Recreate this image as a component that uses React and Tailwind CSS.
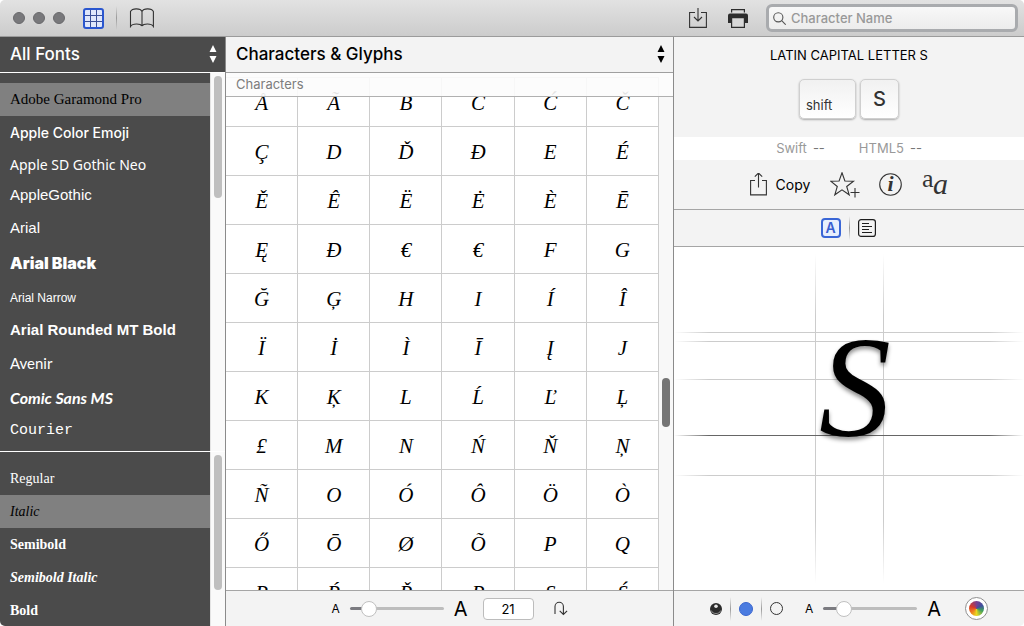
import React, { useState } from 'react';
import clsx from 'clsx';

const fonts = [
  { name: 'Adobe Garamond Pro', row: 'h-[33px]', face: "text-[15px] font-['Liberation_Serif',serif]" },
  { name: 'Apple Color Emoji', row: 'h-[33px]', face: "text-[14px] font-medium font-['Inter',sans-serif]" },
  { name: 'Apple SD Gothic Neo', row: 'h-[30px]', face: "text-[14px] font-['Noto_Sans',sans-serif]" },
  { name: 'AppleGothic', row: 'h-[33px]', face: "text-[15px] font-['Liberation_Sans',sans-serif]" },
  { name: 'Arial', row: 'h-[33px]', face: "text-[15px] font-['Liberation_Sans',sans-serif]" },
  { name: 'Arial Black', row: 'h-[36px]', face: "text-[16px] font-black font-['Inter',sans-serif]" },
  { name: 'Arial Narrow', row: 'h-[33px]', face: "text-[12px] font-['Liberation_Sans_Narrow','Liberation_Sans',sans-serif]" },
  { name: 'Arial Rounded MT Bold', row: 'h-[33px]', face: "text-[15px] font-bold font-['Liberation_Sans',sans-serif]" },
  { name: 'Avenir', row: 'h-[33px]', face: "text-[15px] font-['Lato',sans-serif]" },
  { name: 'Comic Sans MS', row: 'h-[36px]', face: "text-[16px] font-bold italic font-['Lato',sans-serif]" },
  { name: 'Courier', row: 'h-[30px]', face: "text-[15px] font-['Liberation_Mono',monospace]" },
];

const styles = [
  { name: 'Regular', row: 'h-[33px]', face: "text-[14px] font-['Liberation_Serif',serif]" },
  { name: 'Italic', row: 'h-[33px]', face: "text-[14px] italic font-['Liberation_Serif',serif]" },
  { name: 'Semibold', row: 'h-[33px]', face: "text-[14px] font-bold font-['Liberation_Serif',serif]" },
  { name: 'Semibold Italic', row: 'h-[33px]', face: "text-[14px] font-bold italic font-['Liberation_Serif',serif]" },
  { name: 'Bold', row: 'h-[33px]', face: "text-[14px] font-bold font-['Liberation_Serif',serif]" },
];

const glyphs = [
  'Å', 'Ã', 'B', 'C', 'Ć', 'Č',
  'Ç', 'D', 'Ď', 'Đ', 'E', 'É',
  'Ě', 'Ê', 'Ë', 'Ė', 'È', 'Ē',
  'Ę', 'Ð', '€', '€', 'F', 'G',
  'Ğ', 'Ģ', 'H', 'I', 'Í', 'Î',
  'Ï', 'İ', 'Ì', 'Ī', 'Į', 'J',
  'K', 'Ķ', 'L', 'Ĺ', 'Ľ', 'Ļ',
  '£', 'M', 'N', 'Ń', 'Ň', 'Ņ',
  'Ñ', 'O', 'Ó', 'Ô', 'Ö', 'Ò',
  'Ő', 'Ō', 'Ø', 'Õ', 'P', 'Q',
  'R', 'Ŕ', 'Ř', 'Ŗ', 'S', 'Ś',
];

const Divider = ({ className }) => (
  <span className={clsx('w-px bg-linear-to-b from-transparent via-[#9a9a9a] to-transparent', className)} />
);

const Arrows = ({ className }) => (
  <svg viewBox="0 0 8 18" className={clsx('pointer-events-none absolute top-2 h-[18px] w-2', className)} fill="currentColor">
    <path d="M4 0 7.500 7h-7zM4 18 7.500 11h-7z" />
  </svg>
);

const FontList = ({ label, items, initial, thumb }) => {
  const [selected, setSelected] = useState(initial);

  return (
    <div className="flex h-full">
      <ul aria-label={label} className="min-w-0 flex-1 overflow-hidden pt-2.5">
        {items.map((item) => (
          <li key={item.name}>
            <button
              type="button"
              onClick={() => setSelected(item.name)}
              className={clsx(
                'block w-full truncate px-2.5 text-left',
                item.row,
                item.face,
                selected === item.name ? 'bg-[#808080] text-black' : 'text-white'
              )}
            >
              {item.name}
            </button>
          </li>
        ))}
      </ul>
      <div className="w-[15px] border-l border-[#e4e4e4] bg-[#fafafa] px-[3px] pt-[3px]">
        <div className={clsx('w-2 rounded-full bg-[#bfbfbf]', thumb)} />
      </div>
    </div>
  );
};

const SizeSlider = ({ label, initial }) => {
  const [value, setValue] = useState(initial);

  return (
    <label className="flex items-center gap-2.5">
      <span className="text-[12px]">A</span>
      <input
        type="range"
        aria-label={label}
        value={value}
        onChange={(e) => setValue(e.target.value)}
        style={{ backgroundImage: `linear-gradient(to right, #7b7b80 ${value}%, #bdbdbd ${value}%)` }}
        className="h-[3px] w-[94px] appearance-none rounded-full [&::-webkit-slider-thumb]:h-4 [&::-webkit-slider-thumb]:w-4 [&::-webkit-slider-thumb]:appearance-none [&::-webkit-slider-thumb]:rounded-full [&::-webkit-slider-thumb]:border [&::-webkit-slider-thumb]:border-[#c0c0c0] [&::-webkit-slider-thumb]:bg-white"
      />
      <span className="text-[20px] leading-5">A</span>
    </label>
  );
};

const TopBar = () => (
  <header className="flex h-[37px] shrink-0 items-center border-b border-[#9b9b9b] bg-linear-to-b from-[#e2e2e2] to-[#cccccc] pr-[6px] pl-[13px]">
    <div className="flex gap-2">
      <button type="button" aria-label="Close" className="size-3 rounded-full border border-[#69696c] bg-[#78787b]" />
      <button type="button" aria-label="Minimize" className="size-3 rounded-full border border-[#69696c] bg-[#78787b]" />
      <button type="button" aria-label="Zoom" className="size-3 rounded-full border border-[#69696c] bg-[#78787b]" />
    </div>
    <button type="button" aria-label="Grid view" className="ml-[18px]">
      <svg viewBox="0 0 21 21" className="size-[21px]" fill="none" stroke="#2a56cf">
        <rect x="1" y="1" width="19" height="19" rx="2" fill="#dfe7fb" strokeWidth="2" />
        <path d="M7.500 2v17M13.500 2v17M2 7.500h17M2 13.500h17" stroke="#3a4f96" />
      </svg>
    </button>
    <Divider className="mx-3 h-6" />
    <button type="button" aria-label="Book view">
      <svg viewBox="0 0 25 20" className="h-5 w-[25px]" fill="none" stroke="#333" strokeWidth="1.100">
        <path d="M13 3.500v14.500M13 3.500C11.500.2 3.500-.2 1.500 3.500v15c2-3.300 10-3 11.500-.5M13 3.500C14.500.2 22.500-.2 24.400 3.500v15c-2-3.300-9.900-3-11.400-.5" />
      </svg>
    </button>
    <div className="flex-1" />
    <button type="button" aria-label="Save">
      <svg viewBox="0 0 18 21" className="h-[21px] w-[18px]" fill="none" stroke="#333" strokeWidth="1.100">
        <path d="M6 4.500H.6v14.900h16.800V4.500H12M9 0v13M5 9l4 4 4-4" />
      </svg>
    </button>
    <button type="button" aria-label="Print" className="ml-[21px]">
      <svg viewBox="0 0 20 19" className="h-[19px] w-5">
        <path d="M3.600 3.500V.6h12.800v2.900" fill="none" stroke="#2d2d2d" strokeWidth="1.200" />
        <path d="M2 4.500h16a2 2 0 0 1 2 2V14H0V6.500a2 2 0 0 1 2-2z" fill="#2d2d2d" />
        <path d="M3.600 8.600h12.800v9.800H3.600z" fill="#d8d8d8" stroke="#2d2d2d" strokeWidth="1.200" />
      </svg>
    </button>
    <label className="ml-[18px] flex h-7 w-[252px] items-center gap-[5px] rounded-[6px] border-[3px] border-[#a9abae] bg-linear-to-b from-[#f8f8f8] to-[#ececec] px-1">
      <svg viewBox="0 0 13 13" className="size-[13px]" fill="none" stroke="#555" strokeWidth="1.100">
        <circle cx="5.300" cy="5.300" r="4.600" />
        <path d="m8.700 8.700 4 4" />
      </svg>
      <input
        type="text"
        aria-label="Search by character name"
        placeholder="Character Name"
        className="min-w-0 flex-1 bg-transparent pt-0.5 text-[13px] outline-none placeholder:font-medium placeholder:text-[#999]"
      />
    </label>
  </header>
);

const Sidebar = () => (
  <aside className="flex w-[226px] shrink-0 flex-col border-r border-[#8b8b8b] bg-[#4b4b4b]">
    <div className="relative h-9 shrink-0 border-b border-white text-white">
      <select aria-label="Font collection" className="h-full w-full appearance-none px-2.5 text-[17px] font-medium">
        <option>All Fonts</option>
      </select>
      <Arrows className="right-2" />
    </div>
    <div className="min-h-0 flex-1">
      <FontList label="Fonts" items={fonts} initial="Adobe Garamond Pro" thumb="h-[122px]" />
    </div>
    <div className="h-[175px] shrink-0 border-t border-white">
      <FontList label="Styles" items={styles} initial="Italic" thumb="h-[135px]" />
    </div>
  </aside>
);

const GlyphPane = () => (
  <main className="flex min-w-0 flex-1 flex-col">
    <div className="relative h-9 shrink-0 border-b border-[#9f9f9f] bg-[#f3f3f3]">
      <select aria-label="Glyph view" className="h-full w-full appearance-none px-2.5 text-[17px] font-medium">
        <option>Characters &amp; Glyphs</option>
      </select>
      <Arrows className="right-2" />
    </div>
    <div className="relative flex min-h-0 flex-1 bg-white">
      <h2 className="absolute inset-x-0 top-0 h-6 border-b border-[#b0b0b0] bg-[#fcfcfc]/90 px-2.5 text-[13px] leading-[22px] text-[#7d7d7d]">
        Characters
      </h2>
      <div className="min-w-0 flex-1 overflow-hidden">
        <div className="h-[5px] border-b border-[#cccccc]" />
        <div className="grid grid-cols-6">
          {glyphs.map((glyph, i) => (
            <button
              key={i}
              type="button"
              className="h-[49px] border-r border-b border-[#cccccc] pt-[3px] font-['Liberation_Serif',serif] text-[21px] italic"
            >
              {glyph}
            </button>
          ))}
        </div>
      </div>
      <div className="w-3.5 bg-[#f8f8f8] px-[3px]">
        <div className="mt-[305px] h-[49px] w-2 rounded-full bg-[#757575]" />
      </div>
    </div>
    <footer className="flex h-9 shrink-0 items-center justify-center border-t border-[#a5a5a5] bg-[#f3f3f3]">
      <SizeSlider label="Grid glyph size" initial={14} />
      <input
        type="text"
        aria-label="Glyph size"
        defaultValue="21"
        className="ml-[15px] h-[22px] w-[51px] rounded-[4px] border border-[#bcbcbc] bg-white text-center text-[13px]"
      />
      <button type="button" aria-label="Reset size" className="ml-5">
        <svg viewBox="0 0 14 15" className="h-[15px] w-3.5" fill="none" stroke="#333" strokeWidth="1.100">
          <path d="M1 13V5.500a4.200 4.200 0 0 1 8.400 0V13M5.700 9.800l3.700 3.700 3.700-3.700" />
        </svg>
      </button>
    </footer>
  </main>
);

const Preview = () => (
  <div className="relative min-h-0 flex-1 overflow-hidden bg-white">
    <div className="mx-auto h-full w-[69px] border-x border-[#cccccc] mask-y-from-80% mask-y-to-98%" />
    <div className="absolute inset-x-0 top-[85px] h-px bg-[#cccccc] mask-x-from-90% mask-x-to-100%" />
    <div className="absolute inset-x-0 top-[94px] h-px bg-[#cccccc] mask-x-from-90% mask-x-to-100%" />
    <div className="absolute inset-x-0 top-[132px] h-px bg-[#cccccc] mask-x-from-90% mask-x-to-100%" />
    <div className="absolute inset-x-0 top-[188px] h-px bg-[#666666] mask-x-from-90% mask-x-to-100%" />
    <div className="absolute inset-x-0 top-[228px] h-px bg-[#cccccc] mask-x-from-90% mask-x-to-100%" />
    <div className="absolute inset-x-0 top-[69px] pl-3 text-center font-['Liberation_Serif',serif] text-[144px] leading-none italic text-shadow-[0_3px_4px_rgba(0,0,0,0.45)]">
      S
    </div>
  </div>
);

const Inspector = () => (
  <aside className="flex w-[351px] shrink-0 flex-col border-l border-[#8b8b8b] bg-[#f3f3f3]">
    <h1 className="pt-2 text-center text-[13px] leading-5">LATIN CAPITAL LETTER S</h1>
    <div className="mt-3.5 mb-[18px] flex justify-center gap-1 text-[#333]">
      <kbd className="flex h-10 w-[57px] items-end rounded-[5px] border border-[#cfcfcf] bg-linear-to-b from-[#f1f1f1] to-white px-1.5 pb-[3px] font-['Inter',sans-serif] text-[13px] shadow-[0_1px_2px_rgba(0,0,0,0.3)]">
        shift
      </kbd>
      <kbd className="flex h-10 w-[39px] items-center justify-center rounded-[5px] border border-[#cfcfcf] bg-linear-to-b from-[#f1f1f1] to-white font-['Inter',sans-serif] text-[20px] font-medium shadow-[0_1px_2px_rgba(0,0,0,0.3)]">
        S
      </kbd>
    </div>
    <dl className="flex h-[23px] items-center justify-center bg-white text-[13px] text-[#999]">
      <dt>Swift</dt>
      <dd className="ml-1.5 text-[#777]">--</dd>
      <dt className="ml-[34px]">HTML5</dt>
      <dd className="ml-1.5 text-[#777]">--</dd>
    </dl>
    <div className="flex h-[50px] items-center justify-center border-b border-[#a5a5a5]">
      <button type="button" className="flex items-center gap-[9px] text-[14px]">
        <svg viewBox="0 0 17 24" className="h-6 w-[17px]" fill="none" stroke="#333" strokeWidth="1.100">
          <path d="M5 7.500H.6v14.400h15.800V7.500H12M8.500 14.500V0M4.800 3.700 8.500 0l3.700 3.700" />
        </svg>
        Copy
      </button>
      <button type="button" aria-label="Add to favorites" className="ml-5">
        <svg viewBox="0 0 30 26" className="h-[26px] w-[30px]" fill="none" stroke="#333" strokeWidth="1.100">
          <path d="m12 .8 2.900 8.200 8.600.2-6.800 5.300 2.500 8.300-7.200-4.900-7.200 4.900 2.500-8.300L.7 9.200 9.100 9z" />
          <path d="M20.500 20.500h9M25 16v9.500" />
        </svg>
      </button>
      <button type="button" aria-label="Character info" className="ml-[19px]">
        <svg viewBox="0 0 23 23" className="size-[23px]">
          <circle cx="11.500" cy="11.500" r="10.800" fill="none" stroke="#333" strokeWidth="1.100" />
          <text x="11.500" y="18" textAnchor="middle" fill="#333" className="font-['Liberation_Serif',serif] text-[22px] font-bold italic">i</text>
        </svg>
      </button>
      <button type="button" aria-label="Related characters" className="ml-5">
        <svg viewBox="0 0 26 24" className="h-6 w-[26px]" fill="#333">
          <text x="0" y="14" className="font-['Liberation_Serif',serif] text-[26px]">a</text>
          <text x="11" y="21" className="font-['Liberation_Serif',serif] text-[30px] italic">a</text>
        </svg>
      </button>
    </div>
    <div className="flex h-[37px] shrink-0 items-center justify-center border-b border-[#a5a5a5]">
      <button
        type="button"
        aria-label="Glyph preview"
        className="size-5 rounded-[4px] border-2 border-[#3a66d6] bg-[#e8effd] text-center text-[14px] leading-4 font-semibold text-[#3a5fd0]"
      >
        A
      </button>
      <Divider className="mx-2 h-6" />
      <button type="button" aria-label="Text preview" className="mr-0.5">
        <svg viewBox="0 0 18 18" className="size-[18px]" fill="none" stroke="#1d1d1d">
          <rect x=".6" y=".6" width="16.800" height="16.800" rx="2.500" strokeWidth="1.200" />
          <path d="M4 4.500h7M4 7.500h10M4 10.500h7M4 13.500h10" />
        </svg>
      </button>
    </div>
    <Preview />
    <footer className="flex h-9 shrink-0 items-center justify-center border-t border-[#a5a5a5]">
      <button type="button" aria-label="Shaded">
        <svg viewBox="0 0 12 12" className="size-3">
          <circle cx="6" cy="6" r="6" fill="#2b2b2b" />
          <circle cx="6" cy="3.200" r="1.800" fill="#e8e8e8" />
          <path d="M1.200 7.500c1.500 4 8.100 4 9.600 0" fill="none" stroke="#aaa" strokeWidth=".8" />
        </svg>
      </button>
      <Divider className="mx-2 h-6" />
      <button type="button" aria-label="Filled" className="size-3.5 rounded-full border border-[#3a66cf] bg-[#4a7be0]" />
      <Divider className="mx-2 h-6" />
      <button type="button" aria-label="Outline" className="mr-[22px] size-[13px] rounded-full border border-[#333]" />
      <SizeSlider label="Preview size" initial={17} />
      <button
        type="button"
        aria-label="Color"
        className="ml-6 flex size-[23px] items-center justify-center rounded-full border border-[#8f8f8f] bg-white"
      >
        <span className="size-[15px] rounded-full bg-[conic-gradient(#7a3f8f,#3f4f9f_60deg,#3f9f5f_110deg,#e8d820_180deg,#f08020_230deg,#d83a2a_290deg,#7a3f8f)]" />
      </button>
    </footer>
  </aside>
);

export default function App() {
  return (
    <div className="flex h-screen flex-col overflow-hidden rounded-[5px] bg-[#f3f3f3] font-['Inter',sans-serif] text-black">
      <TopBar />
      <div className="flex min-h-0 flex-1">
        <Sidebar />
        <GlyphPane />
        <Inspector />
      </div>
    </div>
  );
}
